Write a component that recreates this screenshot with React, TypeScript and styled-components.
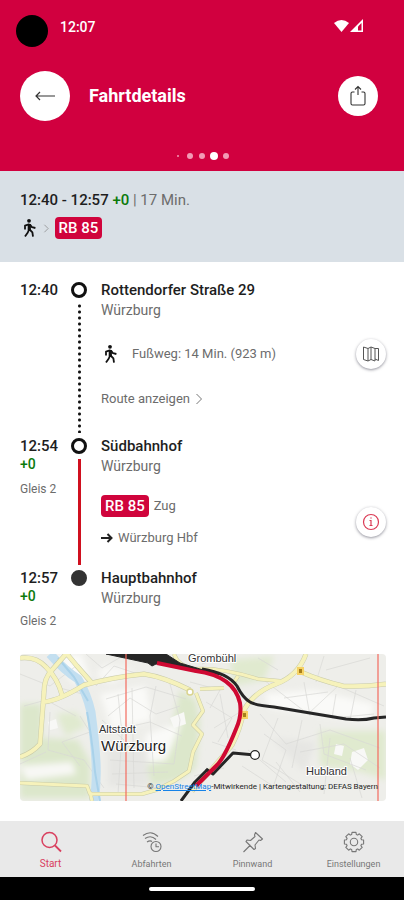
import React from "react";
import styled, { createGlobalStyle, css } from "styled-components";

const colors = {
  red: "#d1003f",
  badge: "#d0043c",
  line: "#d0101f",
  ink: "#1e1e1e",
  grey: "#6c6c6c",
  green: "#0b7a0b",
  summary: "#d9e0e6",
  nav: "#e9e9e9",
};

const GlobalStyle = createGlobalStyle`
  *, *::before, *::after { box-sizing: border-box; }
  body { margin: 0; background: #fff; font-family: Roboto, "Liberation Sans", sans-serif; color: ${colors.ink}; }
  button { font: inherit; color: inherit; border: 0; padding: 0; background: none; cursor: pointer; }
  a { color: inherit; text-decoration: none; }
  h1, h2, p, ol { margin: 0; padding: 0; }
  svg { display: block; }
`;

const Screen = styled.div`
  display: flex;
  flex-direction: column;
  min-height: 100vh;
`;

const Header = styled.header`
  display: flex;
  flex-direction: column;
  background: ${colors.red};
  color: #fff;
  padding: 15px 0 10px;
`;

const StatusBar = styled.div`
  display: flex;
  align-items: flex-start;
  height: 32px;
  padding: 0 40px 0 16px;
`;

const Camera = styled.span`
  width: 32px;
  height: 32px;
  border-radius: 50%;
  background: #000;
`;

const Clock = styled.time`
  flex: 1;
  margin-left: 12px;
  font-size: 14px;
  line-height: 24px;
  font-weight: 500;
`;

const Signals = styled.div`
  display: flex;
  align-items: center;
  height: 22px;
`;

const TitleBar = styled.div`
  display: flex;
  align-items: center;
  margin-top: 24px;
  padding: 0 26px 0 20px;
`;

const Title = styled.h1`
  flex: 1;
  margin-left: 19px;
  font-size: 18px;
  line-height: 24px;
  font-weight: 700;
`;

const RoundButton = styled.button<{ $size: number; $raised?: boolean }>`
  display: grid;
  place-items: center;
  flex: none;
  width: ${(p) => p.$size}px;
  height: ${(p) => p.$size}px;
  border-radius: 50%;
  background: #fff;
  color: #333;
  ${(p) =>
    p.$raised &&
    css`
      color: #555;
      box-shadow: 0 1px 3px rgba(40, 40, 60, 0.5);
    `}
`;

const Pager = styled.div`
  display: flex;
  align-items: center;
  justify-content: center;
  height: 10px;
  margin-top: 30px;
`;

const DotCell = styled.span`
  display: grid;
  place-items: center;
  width: 12px;
`;

const Dot = styled.span<{ $size: number; $active?: boolean }>`
  width: ${(p) => p.$size}px;
  height: ${(p) => p.$size}px;
  border-radius: 50%;
  background: ${(p) => (p.$active ? "#fff" : "#f29ab5")};
`;

const Summary = styled.section`
  display: flex;
  flex-direction: column;
  gap: 7px;
  padding: 19px 20px 23px;
  background: ${colors.summary};
`;

const SummaryTimes = styled.p`
  font-size: 15px;
  line-height: 20px;
  color: ${colors.grey};
  strong { font-weight: 500; color: ${colors.ink}; }
`;

const Delay = styled.span`
  font-weight: 500;
  color: ${colors.green};
`;

const Modes = styled.div`
  display: flex;
  align-items: center;
  gap: 5px;
`;

const Badge = styled.span`
  padding: 0 4px;
  border-radius: 4px;
  background: ${colors.badge};
  color: #fff;
  font-size: 15px;
  line-height: 22px;
  font-weight: 500;
`;

const Main = styled.main`
  flex: 1;
  padding: 18px 18px 20px 20px;
`;

const Journey = styled.ol`
  list-style: none;
`;

const Stop = styled.li<{ $height: number }>`
  display: grid;
  grid-template-columns: 48px 22px 1fr;
  min-height: ${(p) => p.$height}px;
`;

const TimeColumn = styled.div`
  display: flex;
  flex-direction: column;
`;

const Time = styled.time`
  font-size: 15px;
  line-height: 20px;
  font-weight: 500;
`;

const StopDelay = styled(Delay)`
  font-size: 14px;
  line-height: 16px;
`;

const Platform = styled.span`
  margin-top: 9px;
  font-size: 12px;
  line-height: 16px;
  color: ${colors.grey};
`;

const Track = styled.div`
  display: flex;
  flex-direction: column;
  align-items: center;
  padding-top: 2px;
`;

const Marker = styled.span<{ $filled?: boolean }>`
  width: 16px;
  height: 16px;
  border-radius: 50%;
  border: 3px solid ${(p) => (p.$filled ? "#333" : "#111")};
  background: ${(p) => (p.$filled ? "#333" : "#fff")};
`;

const Connector = styled.span<{ $dotted?: boolean }>`
  flex: 1;
  width: 3px;
  margin: 5px 0 3px;
  background: ${(p) =>
    p.$dotted
      ? "radial-gradient(circle, #111 1px, transparent 2px) 0 0 / 3px 6px"
      : colors.line};
`;

const StopBody = styled.div`
  display: flex;
  flex-direction: column;
  padding-left: 11px;
`;

const StopName = styled.h2`
  font-size: 15px;
  line-height: 20px;
  font-weight: 500;
`;

const City = styled.p`
  font-size: 14px;
  line-height: 20px;
  color: ${colors.grey};
`;

const LegRow = styled.div`
  display: flex;
  align-items: center;
  justify-content: space-between;
  margin-top: 19px;
`;

const WalkInfo = styled.p`
  display: flex;
  align-items: center;
  gap: 13px;
  font-size: 13px;
  line-height: 20px;
  color: ${colors.grey};
`;

const RouteLink = styled.button`
  display: flex;
  align-self: flex-start;
  align-items: center;
  gap: 5px;
  margin-top: 20px;
  font-size: 13px;
  line-height: 20px;
  color: ${colors.grey};
`;

const TrainInfo = styled.div`
  display: flex;
  flex-direction: column;
  gap: 11px;
`;

const TrainLine = styled.p`
  display: flex;
  align-items: center;
  gap: 5px;
  font-size: 13px;
  line-height: 20px;
  color: ${colors.grey};
`;

const MapCard = styled.figure`
  position: relative;
  margin: 0;
  border-radius: 4px;
  overflow: hidden;
  svg { width: 100%; height: auto; }
`;

const Attribution = styled.figcaption`
  position: absolute;
  right: 8px;
  bottom: 8px;
  font-size: 8px;
  line-height: 12px;
  white-space: nowrap;
  a { color: #1683e8; text-decoration: underline; }
`;

const Nav = styled.nav`
  display: grid;
  grid-template-columns: repeat(4, 1fr);
  height: 56px;
  background: ${colors.nav};
`;

const NavItem = styled.a<{ $active?: boolean }>`
  display: flex;
  flex-direction: column;
  align-items: center;
  gap: 3px;
  padding-top: 10px;
  font-size: ${(p) => (p.$active ? 10 : 9)}px;
  line-height: 16px;
  color: ${(p) => (p.$active ? "#d9405f" : "#777")};
`;

const SystemBar = styled.div`
  display: grid;
  place-items: center;
  height: 23px;
  background: #000;
`;

const HomeIndicator = styled.span`
  width: 106px;
  height: 4px;
  border-radius: 2px;
  background: #fff;
`;

const Walker = () => (
  <svg width="18" height="20" viewBox="0 0 18 20" fill="none" stroke="#111" strokeWidth="1.8" strokeLinejoin="round">
    <circle cx="9" cy="2.800" r="1.900" fill="#111" stroke="none" />
    <path d="M9.300 6v6" strokeWidth="3.200" />
    <path d="M9.500 6.200 5 7.600v3.800M10 6.400l2 2.800 3.400.8M9 11.500 7.800 14.500l-2.800 4M9.600 11.500l2.800 2.900.6 4.300" />
  </svg>
);

const Chevron = ({ size, color }: { size: number; color: string }) => (
  <svg width={size / 2 + 2} height={size} viewBox="0 0 8 12" fill="none" stroke={color}>
    <path d="m1.500 1 5 5-5 5" />
  </svg>
);

const NavIcon = ({ children }: { children: React.ReactNode }) => (
  <svg width="22" height="22" viewBox="0 0 22 22" fill="none" stroke="currentColor" strokeWidth="1.100" strokeLinejoin="round">
    {children}
  </svg>
);

const gearPath = Array.from({ length: 8 }, (_, i) => {
  const point = (offset: number, r: number) => {
    const a = ((i * 45 + offset - 90) * Math.PI) / 180;
    return `${(11 + r * Math.cos(a)).toFixed(1)} ${(11 + r * Math.sin(a)).toFixed(1)}`;
  };
  return `${i ? "L" : "M"}${point(-12, 9.8)} L${point(12, 9.8)} L${point(17, 7.8)} L${point(28, 7.8)}`;
}).join(" ") + "Z";

const streets = [
  "M0 20l30 12 26-20M4 52l22-6 30 16M30 58l-2 38 36 10 20 28M26 98l-26 12M40 34l30 8M60 62l10 16-28 10 18 24M66 0l16 14 24-14M76 32l18-20 30 10M86 45l40-12 40 12M88 62l22-18 26 16 24-8M86 78l44-10 32 14M88 92l56 2M90 106l64 4M92 120l56-2M98 40l4 40-4 60M112 34l2 100M136 32l-6 30 4 60M150 30l10 36-6 44M82 66l22 20M100 90h34M96 130l44 4",
  "M240 60l26 30 44-14 50 18M244 80l22 16-14 40M258 64l-16 42 48 30M282 66l-10 48M300 70l4 30 42 16M228 96l38 32M222 112l34 22M280 98l44-8 36 24M310 84l-6 56M244 26l44 34 30-28 46 20M264 44l44-6M284 28l6 34M306 16l44-12M316 40l-4 24 42-4M336 36l-6 30M182 10l24-10M170 28l30 8-10 18M186 48l26 16-14 24M194 74l26-16M200 40l8 44M216 96l-24-8M174 122l30-8M256 108l24 30M330 104l12 40M238 4l20 12M304 2l-8 26",
];

const TownMap = () => (
  <svg viewBox="0 0 366 147" role="img" aria-label="Karte von Würzburg mit der Route" fill="none" strokeLinejoin="round">
    <defs>
      <filter id="soften" x="-10%" y="-10%" width="120%" height="120%">
        <feGaussianBlur stdDeviation="3" />
      </filter>
    </defs>
    <rect width="366" height="147" fill="#eeeeea" />
    <g filter="url(#soften)">
      <path d="M0 50h22v50l-22 8zM24 84l34 2 12 22v36H0v-32zM160 36l16 10 4 22-4 46-16 12-28 6-6-20 22-22z" fill="#dce7cb" />
      <path d="M299 77h67v49l-24-8-42-6zM210 6l44-4-10 24-30 6zM36 60l20-2 10 14-20 10z" fill="#e0eacf" />
      <path d="M34 0h28l8 24-16 6zM80 40l46-8 6 34-40 10zM126 80l36-12-16 38-22 4zM244 40l50-4 60 14-4 18-100-14z" fill="#fafaf8" />
      <path d="M0 112l52-4 4 12-50 6zM84 10l30 6-22 14-16-8z" fill="#f8f8f5" />
      <path d="M88 94h40v38H88zM252 84l44 4-12 30z" fill="#e6e6e3" />
    </g>
    <g fill="#f8f8f6">
      <path d="M316 90l8 2-2 10-8-2zM332 98l12-4 4 12-10 10-8-6zM150 64l14-6 2 12-12 4zM28 68l8-3 2 9-8 2z" />
    </g>
    <g stroke="#d9d9d6" strokeWidth="0.7">
      {streets.map((d) => (
        <path key={d} d={d} />
      ))}
    </g>
    <path d="M30 0q14 16 28 25 9 15 13 33 4 30 5 50 1 22-2 39" stroke="#c3dff0" strokeWidth="9" />
    <path d="M38 4l16 19 14 24M67 58q5 26 8 60l5 29" stroke="#a9d2ea" strokeWidth="2" />
    {[
      { color: "#c9cba9", width: 5 },
      { color: "#f6f2bb", width: 4 },
    ].map((road) => (
      <g key={road.color} stroke={road.color} strokeWidth={road.width}>
        <path d="M0 4q16-2 26 9 12 12 16 28M46 0 32 16q-8 8-8 22l-4 52q-8 9-20 13M47 0l10 12 14 16M24 48q16-2 40-17 30-8 60-11 20 3 46 16" />
        <path d="M176 39l7 18-10 14 9 9-9 18-4 19-15 10-18 9-14 4-52 0-3-8-67-3M70 138l2 9" strokeWidth={road.width - 1} />
        <path d="M180 35l24-1M154 0q4 12 20 15 26-2 64 10l22 2M213 30l5-8" strokeWidth={road.width - 1} />
        <path d="M286 0q-8 22-30 30-22 8-32 26-4 20-12 35-16 20-40 46M281 18q18 8 42 14 20 1 43-2" />
      </g>
    ))}
    <circle cx="170" cy="38" r="3" fill="#fff" stroke="#d9d490" strokeWidth="1.5" />
    <g fill="#f6d264">
      <path d="M277 13h7v8h-7zM221 57h7v8h-7z" />
    </g>
    <path d="M279 15h3v4h-3zM223 59h3v4h-3z" fill="#a67f1c" />
    <g stroke="#262626">
      <path d="M86 0h60l14 9 20 6 24 6-28-3-26-7-14-1-4 2-4-3z" fill="#262626" strokeWidth="1" />
      <path d="M182 15q26 4 35 17 6 12 13 16 4 3 24 5l72 12q16 2 28-1l12-1" strokeWidth="3" />
      <path d="M161 147l14-19 12-12" strokeWidth="3" />
      <path d="M186 115l7 5 20-21 22 2" strokeWidth="3" />
    </g>
    <path d="M137 9 176 17q38 5 44 32 2 13-4 26-12 30-20 37l-20 20" stroke="#cf0932" strokeWidth="4" />
    <path d="M106 0v147M358 0v147" stroke="#f36b5e" strokeWidth="1.2" />
    <circle cx="235" cy="101" r="4.400" fill="#fff" stroke="#222" strokeWidth="1.2" />
    <g fill="#333" fontFamily="Liberation Sans, sans-serif" fontSize="11" stroke="#fff" strokeWidth="2" paintOrder="stroke">
      <text x="168" y="8">Grombühl</text>
      <text x="79" y="79">Altstadt</text>
      <text x="81" y="97" fontSize="15" fill="#222">Würzburg</text>
      <text x="286" y="121">Hubland</text>
    </g>
  </svg>
);

export default function App() {
  return (
    <>
      <GlobalStyle />
      <Screen>
        <Header>
          <StatusBar>
            <Camera />
            <Clock>12:07</Clock>
            <Signals>
              <svg width="30" height="14" viewBox="0 0 30 14" fill="#fff">
                <path d="M0 4Q7.500-2 15 4L7.500 13Z" />
                <path d="M29 0v13H16z" />
                <path d="M27.500 4v7.500H24V7.500z" fill={colors.red} />
              </svg>
            </Signals>
          </StatusBar>
          <TitleBar>
            <RoundButton $size={50} aria-label="Zurück">
              <svg width="20" height="10" viewBox="0 0 20 10" fill="none" stroke="currentColor" strokeWidth="1.2">
                <path d="M1 5h19M5 1 1 5l4 4" />
              </svg>
            </RoundButton>
            <Title>Fahrtdetails</Title>
            <RoundButton $size={40} aria-label="Teilen">
              <svg width="18" height="22" viewBox="0 0 18 22" fill="none" stroke="currentColor" strokeWidth="1.1">
                <path d="M5.500 7H3.500Q2 7 2 8.500v10Q2 20 3.500 20h11q1.500 0 1.500-1.500v-10Q16 7 14.500 7h-2M9 10V1.500M6 4.500 9 1.500l3 3" />
              </svg>
            </RoundButton>
          </TitleBar>
          <Pager>
            {[2, 6, 6, 8, 6].map((size, i) => (
              <DotCell key={i}>
                <Dot $size={size} $active={i === 3} />
              </DotCell>
            ))}
          </Pager>
        </Header>

        <Summary>
          <SummaryTimes>
            <strong>12:40 - 12:57</strong> <Delay>+0</Delay> | 17 Min.
          </SummaryTimes>
          <Modes>
            <Walker />
            <Chevron size={9} color="#888" />
            <Badge>RB 85</Badge>
          </Modes>
        </Summary>

        <Main>
          <Journey>
            <Stop $height={156}>
              <TimeColumn>
                <Time>12:40</Time>
              </TimeColumn>
              <Track>
                <Marker />
                <Connector $dotted />
              </Track>
              <StopBody>
                <StopName>Rottendorfer Straße 29</StopName>
                <City>Würzburg</City>
                <LegRow>
                  <WalkInfo>
                    <Walker />
                    Fußweg: 14 Min. (923 m)
                  </WalkInfo>
                  <RoundButton $size={30} $raised aria-label="Karte">
                    <svg width="18" height="16" viewBox="0 0 18 16" fill="none" stroke="currentColor" strokeLinejoin="round">
                      <path d="M1.500 3V13.500L6 15V2.500L1.500 1zM6 15l3-1.500V1L6 2.500M9 13.500l4 1.500V2.500L9 1M13 2.500h3.500v12L13 13" />
                    </svg>
                  </RoundButton>
                </LegRow>
                <RouteLink>
                  Route anzeigen
                  <Chevron size={12} color="#777" />
                </RouteLink>
              </StopBody>
            </Stop>

            <Stop $height={132}>
              <TimeColumn>
                <Time>12:54</Time>
                <StopDelay>+0</StopDelay>
                <Platform>Gleis 2</Platform>
              </TimeColumn>
              <Track>
                <Marker />
                <Connector />
              </Track>
              <StopBody>
                <StopName>Südbahnhof</StopName>
                <City>Würzburg</City>
                <LegRow>
                  <TrainInfo>
                    <TrainLine>
                      <Badge>RB 85</Badge>
                      Zug
                    </TrainLine>
                    <TrainLine>
                      <svg width="12" height="10" viewBox="0 0 12 10" fill="none" stroke="#222" strokeWidth="2">
                        <path d="M0 5h10M6.500 1l4 4-4 4" />
                      </svg>
                      Würzburg Hbf
                    </TrainLine>
                  </TrainInfo>
                  <RoundButton $size={30} $raised aria-label="Information">
                    <svg width="18" height="18" viewBox="0 0 18 18" fill="none" stroke="#db3a55" strokeWidth="1.2">
                      <circle cx="9" cy="9" r="7.500" />
                      <path d="M7.500 7.500H9v5M7.500 12.500h3M8.300 5h1.400" />
                    </svg>
                  </RoundButton>
                </LegRow>
              </StopBody>
            </Stop>

            <Stop $height={86}>
              <TimeColumn>
                <Time>12:57</Time>
                <StopDelay>+0</StopDelay>
                <Platform>Gleis 2</Platform>
              </TimeColumn>
              <Track>
                <Marker $filled />
              </Track>
              <StopBody>
                <StopName>Hauptbahnhof</StopName>
                <City>Würzburg</City>
              </StopBody>
            </Stop>
          </Journey>

          <MapCard>
            <TownMap />
            <Attribution>
              © <a href="#osm">OpenStreetMap</a>-Mitwirkende | Kartengestaltung: DEFAS Bayern
            </Attribution>
          </MapCard>
        </Main>

        <Nav aria-label="Hauptnavigation">
          <NavItem href="#start" $active aria-current="page">
            <NavIcon>
              <circle cx="9.500" cy="9" r="7.500" strokeWidth="1.5" />
              <path d="m15 14.500 6 6" strokeWidth="1.800" />
            </NavIcon>
            Start
          </NavItem>
          <NavItem href="#abfahrten">
            <NavIcon>
              <circle cx="15" cy="15.500" r="5" />
              <path d="M15 12.500v3.200h3M2 4.500q8-6 15 1M4 7.500q6-4 11 1M6 11q3-2 5-.5" />
            </NavIcon>
            Abfahrten
          </NavItem>
          <NavItem href="#pinnwand">
            <NavIcon>
              <path d="m1.500 21 7-7M13.500 1.500l7 6.500-2 1.500-1.500-.5-4 5 .5 3.500-1.500 1-8-8 1-1.500 3.500.5 4.500-4-.5-1.500z" />
            </NavIcon>
            Pinnwand
          </NavItem>
          <NavItem href="#einstellungen">
            <NavIcon>
              <path d={gearPath} />
              <circle cx="11" cy="11" r="3.700" />
            </NavIcon>
            Einstellungen
          </NavItem>
        </Nav>
        <SystemBar>
          <HomeIndicator />
        </SystemBar>
      </Screen>
    </>
  );
}
